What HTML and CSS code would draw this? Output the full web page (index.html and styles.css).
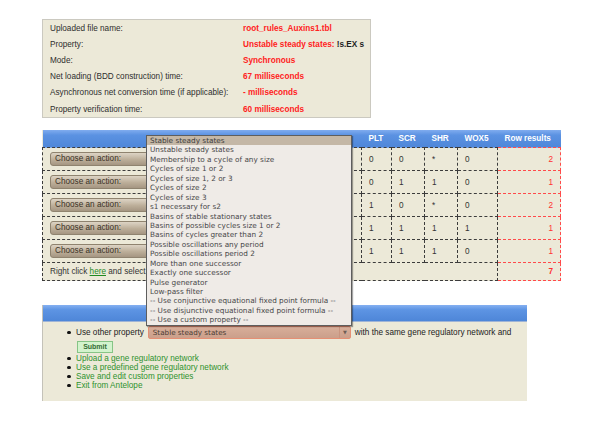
FILE: index.html
```html
<!DOCTYPE html>
<html>
<head>
<meta charset="utf-8">
<title>Antelope results</title>
<link rel="stylesheet" href="styles.css">
</head>
<body>
<div class="page">
  <div class="info">
    <table class="info-table">
      <tr><td class="lbl">Uploaded file name:</td><td class="val">root_rules_Auxins1.tbl</td></tr>
      <tr><td class="lbl">Property:</td><td class="val">Unstable steady states: <span class="formula">!s.EX s</span></td></tr>
      <tr><td class="lbl">Mode:</td><td class="val">Synchronous</td></tr>
      <tr><td class="lbl">Net loading (BDD construction) time:</td><td class="val">67 milliseconds</td></tr>
      <tr><td class="lbl">Asynchronous net conversion time (if applicable):</td><td class="val">- milliseconds</td></tr>
      <tr><td class="lbl">Property verification time:</td><td class="val">60 milliseconds</td></tr>
    </table>
  </div>

  <table class="results">
    <colgroup>
      <col class="w-act"><col class="w-plt"><col class="w-scr"><col class="w-shr"><col class="w-wox"><col class="w-res">
    </colgroup>
    <thead>
      <tr><th></th><th>PLT</th><th>SCR</th><th>SHR</th><th>WOX5</th><th>Row results</th></tr>
    </thead>
    <tbody>
      <tr><td><span class="action">Choose an action:</span></td><td>0</td><td>0</td><td>*</td><td>0</td><td class="res">2</td></tr>
      <tr><td><span class="action">Choose an action:</span></td><td>0</td><td>1</td><td>1</td><td>0</td><td class="res">1</td></tr>
      <tr><td><span class="action">Choose an action:</span></td><td>1</td><td>0</td><td>*</td><td>0</td><td class="res">2</td></tr>
      <tr><td><span class="action">Choose an action:</span></td><td>1</td><td>1</td><td>1</td><td>1</td><td class="res">1</td></tr>
      <tr><td><span class="action">Choose an action:</span></td><td>1</td><td>1</td><td>1</td><td>0</td><td class="res">1</td></tr>
      <tr class="sum"><td colspan="5">Right click <a href="#" class="dl">here</a> and select</td><td class="res total">7</td></tr>
    </tbody>
  </table>

  <div class="panel">
    <div class="bar"></div>
    <ul class="menu">
      <li>
        <div class="prop-line">
          <span>Use other property</span>
          <span class="select"><span class="select-text">Stable steady states</span><span class="arrow">&#9660;</span></span>
          <span>with the same gene regulatory network and</span>
        </div>
        <button class="submit">Submit</button>
      </li>
      <li><a href="#">Upload a gene regulatory network</a></li>
      <li><a href="#">Use a predefined gene regulatory network</a></li>
      <li><a href="#">Save and edit custom properties</a></li>
      <li><a href="#">Exit from Antelope</a></li>
    </ul>
  </div>

  <ul class="popup">
    <li class="sel">Stable steady states</li>
    <li>Unstable steady states</li>
    <li>Membership to a cycle of any size</li>
    <li>Cycles of size 1 or 2</li>
    <li>Cycles of size 1, 2 or 3</li>
    <li>Cycles of size 2</li>
    <li>Cycles of size 3</li>
    <li>s1 necessary for s2</li>
    <li>Basins of stable stationary states</li>
    <li>Basins of possible cycles size 1 or 2</li>
    <li>Basins of cycles greater than 2</li>
    <li>Possible oscillations any period</li>
    <li>Possible oscillations period 2</li>
    <li>More than one successor</li>
    <li>Exactly one successor</li>
    <li>Pulse generator</li>
    <li>Low-pass filter</li>
    <li>-- Use conjunctive equational fixed point formula --</li>
    <li>-- Use disjunctive equational fixed point formula --</li>
    <li>-- Use a custom property --</li>
  </ul>
</div>
</body>
</html>
```

FILE: styles.css
```css
html, body {
  margin: 0;
  padding: 0;
  background: #ffffff;
}

.page {
  position: relative;
  padding: 19px 0 0 42px;
  font-family: "Liberation Sans", Arial, sans-serif;
  color: #333;
}

/* info box */
.info {
  width: 327px;
  border: 1px solid #cbc9c0;
  background: #ece9d8;
}

.info-table {
  border-collapse: collapse;
  font-size: 8.2px;
}

.info-table td {
  height: 16.2px;
  padding: 0;
  white-space: nowrap;
}

.info-table .lbl {
  width: 193px;
  padding-left: 7px;
  color: #2e2e2e;
}

.info-table .val {
  color: #ff2121;
  font-weight: bold;
}

.formula {
  color: #222;
}

/* results table */
.results {
  margin-top: 12px;
  width: 518px;
  border-collapse: collapse;
  table-layout: fixed;
  font-size: 8.2px;
  background: #ece9d8;
}

.w-act { width: 319px; }
.w-plt { width: 30px; }
.w-scr { width: 33px; }
.w-shr { width: 33px; }
.w-wox { width: 40px; }
.w-res { width: 63px; }

.results th {
  height: 17px;
  padding: 0 7px;
  text-align: left;
  color: #fff;
  font-weight: bold;
  background: linear-gradient(to bottom, #80acef 0%, #5b92e2 30%, #4f87d9 100%);
  border: none;
  white-space: nowrap;
}

.results td {
  height: 22px;
  padding: 0 7px;
  border: 1px dashed #3c3c3c;
  color: #333;
  white-space: nowrap;
  overflow: hidden;
}

.results td.res {
  text-align: right;
  color: #ff2f2f;
  border: 1px dashed #ff4a4a;
}

.results tr.sum td {
  height: 16.5px;
}

.results td.total {
  font-weight: bold;
}

.action {
  display: inline-block;
  width: 196px;
  height: 12px;
  line-height: 12px;
  padding-left: 4px;
  border: 1px solid #8f836f;
  border-radius: 3px;
  background: linear-gradient(to bottom, #ddd4c5 0%, #bcae99 55%, #a59682 100%);
  color: #3b3226;
  vertical-align: middle;
}

.dl {
  color: #1f8a1f;
  text-decoration: underline;
}

/* bottom panel */
.panel {
  margin-top: 24px;
  width: 484px;
  height: 96px;
  background: #ece9d8;
  border-left: 1px solid #c4c2b9;
}

.bar {
  height: 16px;
  background: linear-gradient(to bottom, #85b0f1 0%, #5d94e3 30%, #4e86d8 100%);
  border-bottom: 1px solid #9fb4d6;
}

.menu {
  list-style: none;
  margin: 0;
  padding: 4px 0 0 33px;
  font-size: 8.2px;
  line-height: 9.1px;
}

.menu li {
  position: relative;
}

.menu li::before {
  content: "";
  position: absolute;
  left: -9px;
  top: 3px;
  width: 3.5px;
  height: 3.5px;
  border-radius: 50%;
  background: #111;
}

.menu li:first-child::before {
  top: 5px;
}

.prop-line {
  display: flex;
  align-items: center;
  gap: 4px;
  height: 14px;
  color: #222;
}

.select {
  display: flex;
  align-items: center;
  width: 201px;
  height: 11px;
  border: 1px solid #e58f74;
  border-radius: 2px;
  background: linear-gradient(to bottom, #d8ae9a 0%, #cb9f8a 100%);
  font-family: "DejaVu Sans", sans-serif;
  font-size: 7.2px;
  color: #4a3c34;
}

.select-text {
  flex: 1;
  padding-left: 4px;
}

.arrow {
  width: 10px;
  height: 11px;
  line-height: 11px;
  text-align: center;
  border-left: 1px solid #c99580;
  font-size: 5px;
  color: #6d5e56;
}

.submit {
  display: block;
  margin: 1px 0 1px 1px;
  width: 36px;
  height: 12px;
  padding: 0;
  border: 1px solid #86c486;
  background: #d3f3cd;
  font-family: "Liberation Sans", Arial, sans-serif;
  font-size: 7px;
  font-weight: bold;
  color: #356d35;
  line-height: 10px;
}

.menu a {
  color: #2e922e;
  text-decoration: none;
}

/* open dropdown popup */
.popup {
  position: absolute;
  left: 146px;
  top: 135px;
  width: 204px;
  margin: 0;
  padding: 0;
  list-style: none;
  background: #efebe7;
  border: 1px solid #5e5e5e;
  box-shadow: 1px 1px 1px rgba(0, 0, 0, 0.35);
  font-family: "DejaVu Sans", sans-serif;
  font-size: 7.3px;
  color: #474747;
}

.popup li {
  height: 9.45px;
  line-height: 9.45px;
  padding-left: 3px;
  white-space: nowrap;
}

.popup li.sel {
  background: #c4b7a6;
  color: #3d3d3d;
}
```
